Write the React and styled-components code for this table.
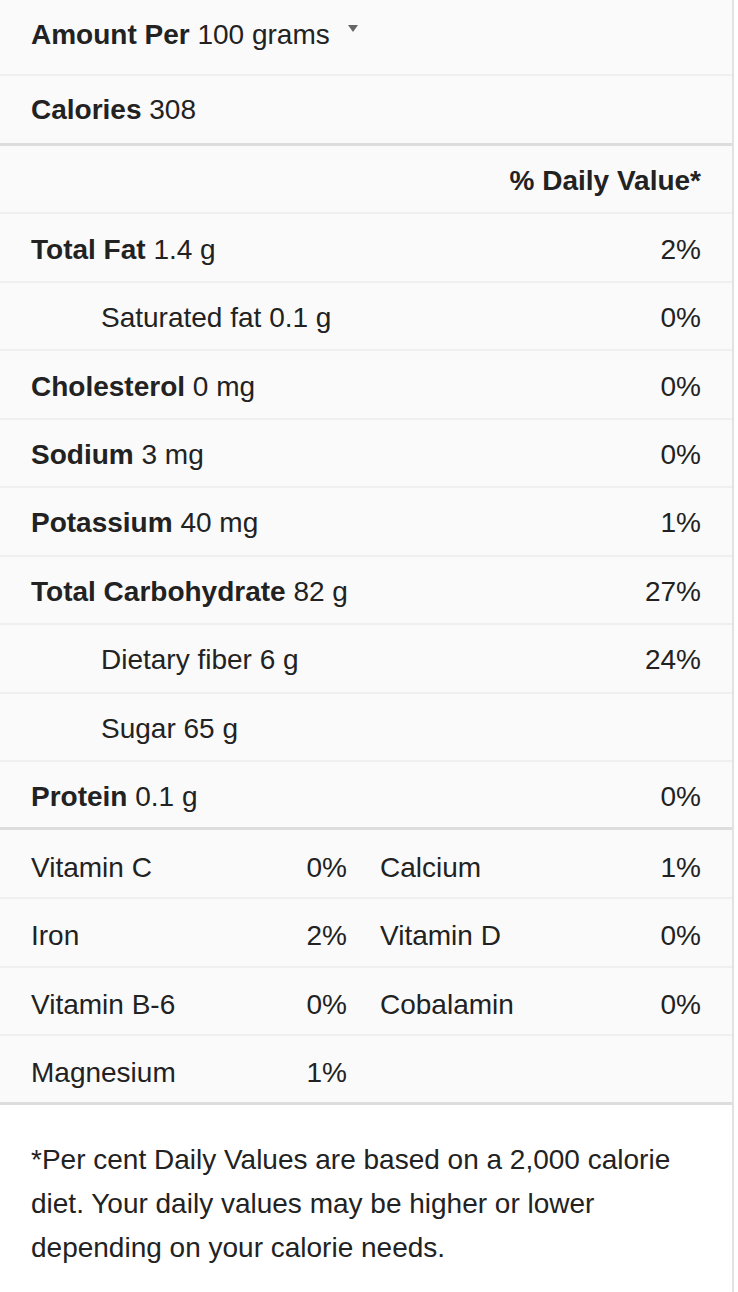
import React from 'react'
import styled, { createGlobalStyle } from 'styled-components'

const Global = createGlobalStyle`
  html, body {
    margin: 0;
    padding: 0;
    background: #ffffff;
  }
  body {
    font-family: "Liberation Sans", Arial, Helvetica, sans-serif;
    color: #222222;
  }
`

const nutrients = [
  { name: 'Total Fat', amount: '1.4 g', dv: '2%' },
  { name: 'Saturated fat', amount: '0.1 g', dv: '0%', sub: true },
  { name: 'Cholesterol', amount: '0 mg', dv: '0%' },
  { name: 'Sodium', amount: '3 mg', dv: '0%' },
  { name: 'Potassium', amount: '40 mg', dv: '1%' },
  { name: 'Total Carbohydrate', amount: '82 g', dv: '27%' },
  { name: 'Dietary fiber', amount: '6 g', dv: '24%', sub: true },
  { name: 'Sugar', amount: '65 g', dv: '', sub: true },
  { name: 'Protein', amount: '0.1 g', dv: '0%', last: true },
]

const vitamins = [
  [{ name: 'Vitamin C', dv: '0%' }, { name: 'Calcium', dv: '1%' }],
  [{ name: 'Iron', dv: '2%' }, { name: 'Vitamin D', dv: '0%' }],
  [{ name: 'Vitamin B-6', dv: '0%' }, { name: 'Cobalamin', dv: '0%' }],
  [{ name: 'Magnesium', dv: '1%' }],
]

const App = () => {
  return (
    <>
      <Global />
      <Panel>
        <Table>
          <Row $height={76} $shift={-4}>
            <Label>
              <b>Amount Per</b> 100 grams
              <Caret />
            </Label>
          </Row>
          <Row $height={70} $shift={0} $thick>
            <Label><b>Calories</b> 308</Label>
          </Row>
          <Row>
            <Label />
            <Header>% Daily Value*</Header>
          </Row>
          {nutrients.map((n) => (
            <Row key={n.name} $thick={n.last}>
              <Label $sub={n.sub}>
                {n.sub ? n.name : <b>{n.name}</b>} {n.amount}
              </Label>
              <Value>{n.dv}</Value>
            </Row>
          ))}
          {vitamins.map((pair, i) => (
            <VitaminRow key={i} $thick={i === vitamins.length - 1}>
              {pair.map((v) => (
                <VitaminCell key={v.name}>
                  <span>{v.name}</span>
                  <Value>{v.dv}</Value>
                </VitaminCell>
              ))}
            </VitaminRow>
          ))}
        </Table>
        <Footnote>
          *Per cent Daily Values are based on a 2,000 calorie diet. Your daily values may be higher or lower depending on your calorie needs.
        </Footnote>
      </Panel>
    </>
  )
}

const Panel = styled.div`
  width: 732px;
  border-right: 2px solid #e2e2e2;
  min-height: 1292px;
  background: #ffffff;
`

const Table = styled.div`
  background: #fafafa;
`

// $shift > 0 pushes the text down, < 0 lifts it
const Row = styled.div`
  box-sizing: border-box;
  height: ${(p) => (p.$height ? p.$height : 68.45)}px;
  display: flex;
  align-items: center;
  justify-content: space-between;
  padding: 0 31px;
  padding-top: ${(p) => Math.max(p.$shift === undefined ? 4 : p.$shift, 0)}px;
  padding-bottom: ${(p) => Math.max(-(p.$shift || 0), 0)}px;
  font-size: 28px;
  border-bottom: ${(p) => (p.$thick ? '3px solid #dddddd' : '2px solid #efefef')};
`

const Label = styled.div`
  white-space: nowrap;
  padding-left: ${(p) => (p.$sub ? 70 : 0)}px;

  b {
    font-weight: 700;
  }
`

const Caret = styled.span`
  display: inline-block;
  width: 0;
  height: 0;
  margin-left: 18px;
  vertical-align: 12px;
  border-left: 5.5px solid transparent;
  border-right: 5.5px solid transparent;
  border-top: 7px solid #666666;
`

const Header = styled.div`
  font-weight: 700;
`

const Value = styled.span`
  text-align: right;
`

const VitaminRow = styled.div`
  box-sizing: border-box;
  height: 68.6px;
  display: grid;
  grid-template-columns: 316px 1fr;
  column-gap: 33px;
  align-items: center;
  padding: 8px 31px 0 31px;
  font-size: 28px;
  border-bottom: ${(p) => (p.$thick ? '3px solid #dddddd' : '2px solid #efefef')};
`

const VitaminCell = styled.div`
  display: flex;
  justify-content: space-between;
`

const Footnote = styled.p`
  margin: 0;
  padding: 33px 50px 0 31px;
  font-size: 28px;
  line-height: 44px;
`

export default App
